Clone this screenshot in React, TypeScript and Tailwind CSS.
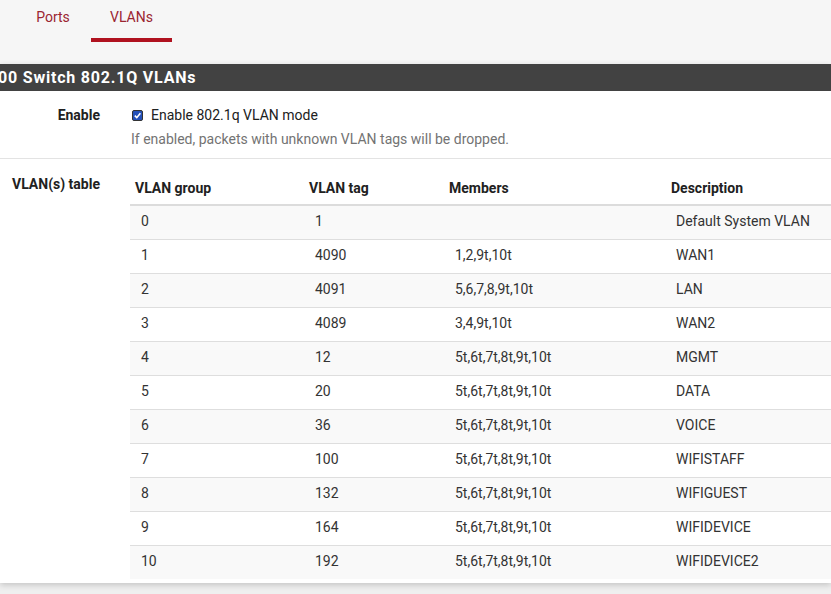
import React from 'react';

const rows: [string, string, string, string][] = [
  ['0', '1', '', 'Default System VLAN'],
  ['1', '4090', '1,2,9t,10t', 'WAN1'],
  ['2', '4091', '5,6,7,8,9t,10t', 'LAN'],
  ['3', '4089', '3,4,9t,10t', 'WAN2'],
  ['4', '12', '5t,6t,7t,8t,9t,10t', 'MGMT'],
  ['5', '20', '5t,6t,7t,8t,9t,10t', 'DATA'],
  ['6', '36', '5t,6t,7t,8t,9t,10t', 'VOICE'],
  ['7', '100', '5t,6t,7t,8t,9t,10t', 'WIFISTAFF'],
  ['8', '132', '5t,6t,7t,8t,9t,10t', 'WIFIGUEST'],
  ['9', '164', '5t,6t,7t,8t,9t,10t', 'WIFIDEVICE'],
  ['10', '192', '5t,6t,7t,8t,9t,10t', 'WIFIDEVICE2'],
];

export default function App() {
  return (
    <div
      className="w-[831px] h-[594px] overflow-hidden bg-[#efefef] text-[14px] text-[#212121]"
      style={{ fontFamily: 'Roboto, "Liberation Sans", sans-serif' }}
    >
      {/* tabs */}
      <div className="h-[64px] bg-[#f6f6f6] flex items-start pl-[15px]">
        <div className="w-[76px] h-[42px] flex flex-col items-center">
          <span className="mt-[7px] text-[#9b2531]">Ports</span>
        </div>
        <div className="w-[81px] h-[42px] flex flex-col items-center justify-between">
          <span className="mt-[7px] text-[#9b2531]">VLANs</span>
          <div className="w-full h-[4px] bg-[#b0121f]" />
        </div>
      </div>

      {/* panel */}
      <div className="bg-white shadow-[0_2px_6px_rgba(0,0,0,0.18)]">
        <div className="h-[27px] bg-[#424242] flex items-center overflow-hidden">
          <span className="ml-[-2px] text-white font-bold text-[16px] tracking-[0.8px] whitespace-nowrap">
            00 Switch 802.1Q VLANs
          </span>
        </div>

        {/* enable row */}
        <div className="flex h-[68px] border-b border-[#e3e3e3]">
          <div className="w-[115px] pr-[15px] pt-[14px] text-right font-bold">Enable</div>
          <div className="pl-[16px] pt-[15px]">
            <div className="flex items-center leading-[18px]">
              <span className="w-[11px] h-[11px] ml-[1px] mr-[8px] rounded-[2px] border border-[#333] bg-[#2450b8] flex items-center justify-center">
                <svg width="9" height="9" viewBox="0 0 10 10">
                  <path d="M2 5.2 L4.2 7.4 L8.2 2.6" fill="none" stroke="white" strokeWidth="1.8" />
                </svg>
              </span>
              <span>Enable 802.1q VLAN mode</span>
            </div>
            <div className="mt-[6px] text-[#737373] leading-[18px]">
              If enabled, packets with unknown VLAN tags will be dropped.
            </div>
          </div>
        </div>

        {/* table row */}
        <div className="flex pb-[4px]">
          <div className="w-[115px] pr-[15px] pt-[15px] text-right font-bold">VLAN(s) table</div>
          <div className="ml-[15px] pt-[16px] flex-1 overflow-hidden">
            <table className="w-[760px] border-collapse table-fixed">
              <colgroup>
                <col className="w-[174px]" />
                <col className="w-[140px]" />
                <col className="w-[222px]" />
                <col />
              </colgroup>
              <thead>
                <tr className="h-[30px] border-b-2 border-[#dcdcdc]">
                  <th className="text-left font-bold pl-[5px] align-top pt-[3px]">VLAN group</th>
                  <th className="text-left font-bold pl-[5px] align-top pt-[3px]">VLAN tag</th>
                  <th className="text-left font-bold pl-[5px] align-top pt-[3px]">Members</th>
                  <th className="text-left font-bold pl-[5px] align-top pt-[3px]">Description</th>
                </tr>
              </thead>
              <tbody>
                {rows.map((r, i) => (
                  <tr
                    key={i}
                    className={`h-[34px] border-t border-[#dedede] ${i % 2 === 0 ? 'bg-[#f9f9f9]' : 'bg-white'}`}
                  >
                    <td className="pl-[11px] pb-[1px] text-[#333]">{r[0]}</td>
                    <td className="pl-[11px] pb-[1px] text-[#333]">{r[1]}</td>
                    <td className="pl-[11px] pb-[1px] text-[#333]">{r[2]}</td>
                    <td className="pl-[10px] pb-[1px] text-[#333]">{r[3]}</td>
                  </tr>
                ))}
              </tbody>
            </table>
          </div>
        </div>
      </div>
    </div>
  );
}
